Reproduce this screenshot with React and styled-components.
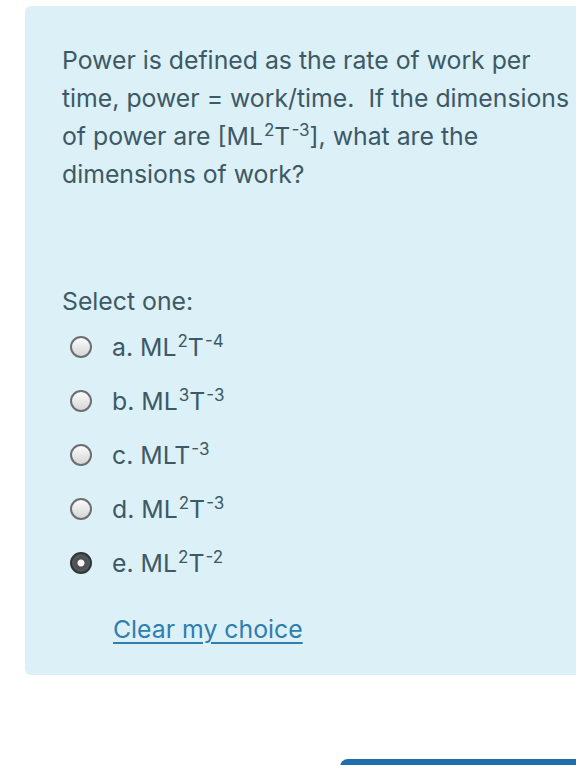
import React from "react";
import styled, { createGlobalStyle } from "styled-components";

const Global = createGlobalStyle`
  html, body {
    margin: 0;
    padding: 0;
    background: #ffffff;
    overflow: hidden;
  }
  body {
    font-family: Inter, "Liberation Sans", Arial, sans-serif;
  }
`;

const options = [
  { key: "a", base: "ML", p1: "2", mid: "T", p2: "-4" },
  { key: "b", base: "ML", p1: "3", mid: "T", p2: "-3" },
  { key: "c", base: "MLT", p1: "", mid: "", p2: "-3" },
  { key: "d", base: "ML", p1: "2", mid: "T", p2: "-3" },
  { key: "e", base: "ML", p1: "2", mid: "T", p2: "-2", checked: true },
];

export default function App() {
  return (
    <>
      <Global />
      <Page>
        <Card>
          <Question>
            Power is defined as the rate of work per
            <br />
            time, power = work/time.&nbsp; If the dimensions
            <br />
            of power are [ML<Sup>2</Sup>T<Sup>-3</Sup>], what are the
            <br />
            dimensions of work?
          </Question>
          <Prompt>Select one:</Prompt>
          <Answers>
            {options.map((o) => (
              <Option key={o.key}>
                <Radio $checked={o.checked} />
                <Label>
                  {o.key}. {o.base}
                  {o.p1 && <Sup>{o.p1}</Sup>}
                  {o.mid}
                  <Sup>{o.p2}</Sup>
                </Label>
              </Option>
            ))}
          </Answers>
          <ClearLink href="#">Clear my choice</ClearLink>
        </Card>
        <Footer>
          <NextButton />
        </Footer>
      </Page>
    </>
  );
}

const Page = styled.div`
  width: 576px;
  height: 765px;
  overflow: hidden;
  padding: 6px 0 0 25px;
  box-sizing: border-box;
`;

const Card = styled.div`
  width: 570px;
  height: 669px;
  box-sizing: border-box;
  background: #dcf0f7;
  border-radius: 6px 0 0 6px;
  padding: 35px 0 0 37px;
  color: #3d5965;
`;

const Question = styled.p`
  margin: 0;
  white-space: nowrap;
  font-size: 24.8px;
  line-height: 38px;
`;

const Sup = styled.sup`
  font-size: 17px;
  line-height: 0;
  vertical-align: 9px;
  margin-left: 1px;
`;

const Prompt = styled.div`
  margin-top: 93px;
  font-size: 24.8px;
  line-height: 30px;
`;

const Answers = styled.div`
  display: flex;
  flex-direction: column;
  gap: 24px;
  margin-top: 16px;
  padding-left: 8px;
`;

const Option = styled.label`
  display: flex;
  align-items: center;
  gap: 20px;
  height: 30px;
  font-size: 24.8px;
`;

const Radio = styled.span`
  width: 22px;
  height: 22px;
  border-radius: 50%;
  box-sizing: border-box;
  flex: none;
  border: 2px solid ${(p) => (p.$checked ? "#2f3437" : "#6b6f72")};
  background: ${(p) =>
    p.$checked
      ? "radial-gradient(circle, #f4f4f4 0 3px, #4a4f52 4px, #5c6164 100%)"
      : "linear-gradient(#fbfbfb, #d6d6d6)"};
`;

const Label = styled.span`
  line-height: 30px;
`;

const ClearLink = styled.a`
  display: block;
  width: max-content;
  margin-top: 36px;
  margin-left: 51px;
  font-size: 24.8px;
  line-height: 30px;
  color: #2f7eae;
  text-decoration: underline;
  text-underline-offset: 4px;
`;

const Footer = styled.div`
  display: flex;
  justify-content: flex-end;
  padding-top: 84px;
`;

const NextButton = styled.div`
  width: 236px;
  height: 40px;
  background: #1f6fad;
  border-radius: 8px 0 0 0;
`;
